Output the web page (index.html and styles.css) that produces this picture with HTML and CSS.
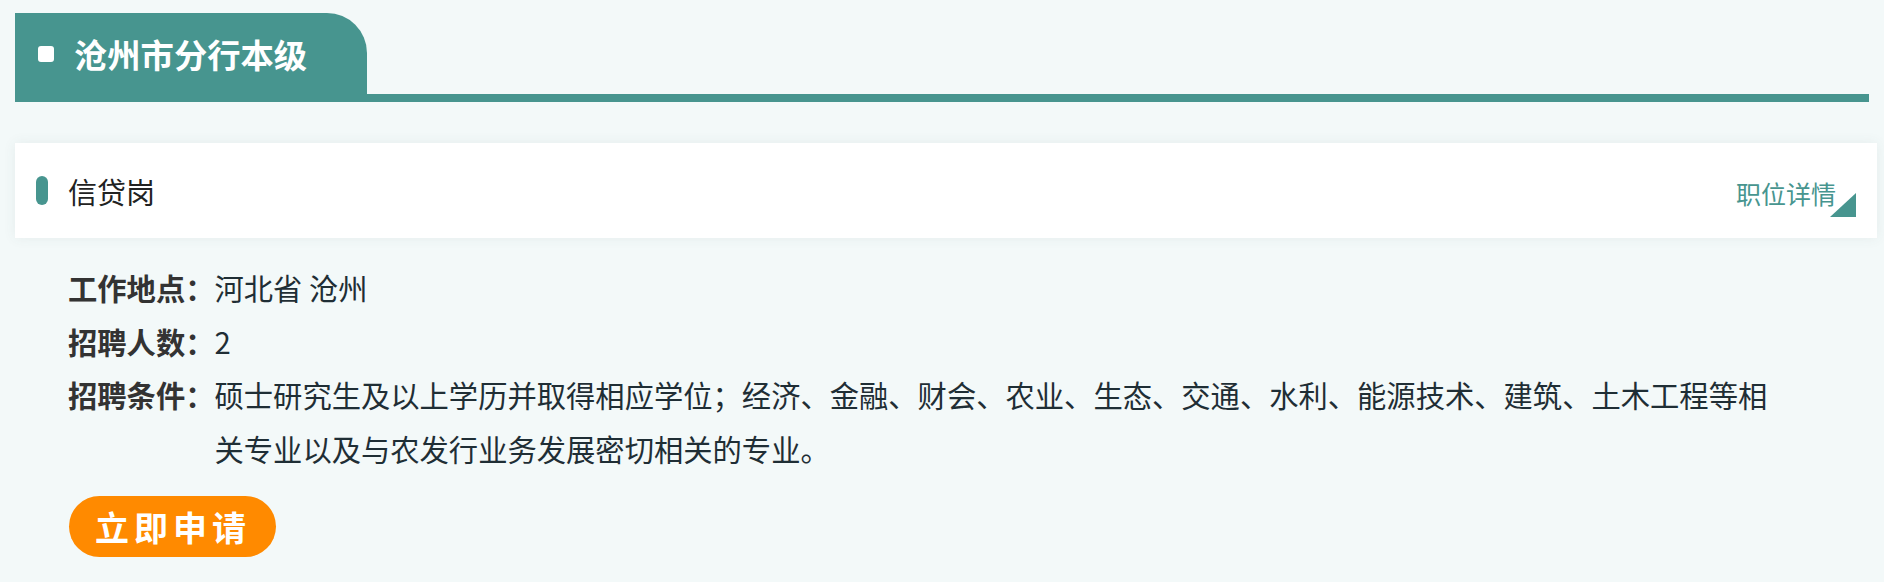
FILE: index.html
```html
<!DOCTYPE html>
<html lang="zh-CN">
<head>
  <meta charset="UTF-8" />
  <meta name="viewport" content="width=device-width, initial-scale=1.0"/>
  <title>沧州市分行本级</title>
  <link rel="stylesheet" href="styles.css">
</head>
<body>

<div class="branch">

  <div class="branch-head">
    <div class="branch-tab">
      <span class="dot"></span>
      <h2>沧州市分行本级</h2>
    </div>
  </div>

  <div class="job-card">
    <span class="pill"></span>
    <span class="job-name">信贷岗</span>
    <a class="job-more" href="#">职位详情</a>
    <svg class="corner" width="26" height="24" viewBox="0 0 26 24">
      <polygon points="26,0 26,24 0,24" fill="#47958f" />
    </svg>
  </div>

  <div class="job-info">
    <div class="row">
      <span class="label">工作地点：</span>
      <span class="value">河北省 沧州</span>
    </div>
    <div class="row">
      <span class="label">招聘人数：</span>
      <span class="value">2</span>
    </div>
    <div class="row">
      <span class="label">招聘条件：</span>
      <span class="value">硕士研究生及以上学历并取得相应学位；经济、金融、财会、农业、生态、交通、水利、能源技术、建筑、土木工程等相关专业以及与农发行业务发展密切相关的专业。</span>
    </div>
    <button class="apply">立即申请</button>
  </div>

</div>

</body>
</html>
```

FILE: styles.css
```css
body {
  margin: 0;
  background: #f3f9f9;
  font-family: "Noto Sans CJK SC", sans-serif;
}
.branch {
  padding: 13px 15px 0;
}
.branch-head {
  display: flex;
  border-bottom: 8px solid #47958f;
}
.branch-tab {
  display: flex;
  align-items: center;
  box-sizing: border-box;
  width: 352px;
  height: 81px;
  padding-left: 23px;
  background: #47958f;
  border-top-right-radius: 40px;
}
.dot {
  width: 16px;
  height: 16px;
  margin-right: 20px;
  background: #fff;
  border-radius: 3px;
}
.branch-tab h2 {
  margin: 0;
  font-size: 33.3px;
  font-weight: bold;
  color: #fff;
}
.job-card {
  position: relative;
  display: flex;
  align-items: center;
  height: 95px;
  margin: 41px -8px 0 0;
  padding: 0 41px 0 21px;
  background: #fff;
  box-shadow: 0 0 12px rgba(60, 90, 90, 0.08);
}
.pill {
  width: 12px;
  height: 29px;
  margin-right: 20px;
  background: #47958f;
  border-radius: 6px;
}
.job-name {
  flex: 1;
  font-size: 29px;
  color: #222;
}
.job-more {
  margin-top: 4px;
  font-size: 25px;
  color: #47958f;
  text-decoration: none;
}
.corner {
  position: absolute;
  right: 21px;
  bottom: 21px;
}
.job-info {
  padding: 23px 85px 0 53px;
  font-size: 29.3px;
  line-height: 53.5px;
}
.row {
  display: flex;
}
.label {
  flex: none;
  font-weight: bold;
  color: #333;
}
.value {
  color: #1f2e35;
}
.apply {
  margin: 21px 0 0 1px;
  padding: 0 25px 0 26px;
  height: 61px;
  border: none;
  border-radius: 31px;
  background: #ff8a00;
  color: #fff;
  font-family: "Noto Sans CJK SC", sans-serif;
  font-size: 34px;
  font-weight: bold;
  letter-spacing: 5px;
  line-height: 61px;
}
```
